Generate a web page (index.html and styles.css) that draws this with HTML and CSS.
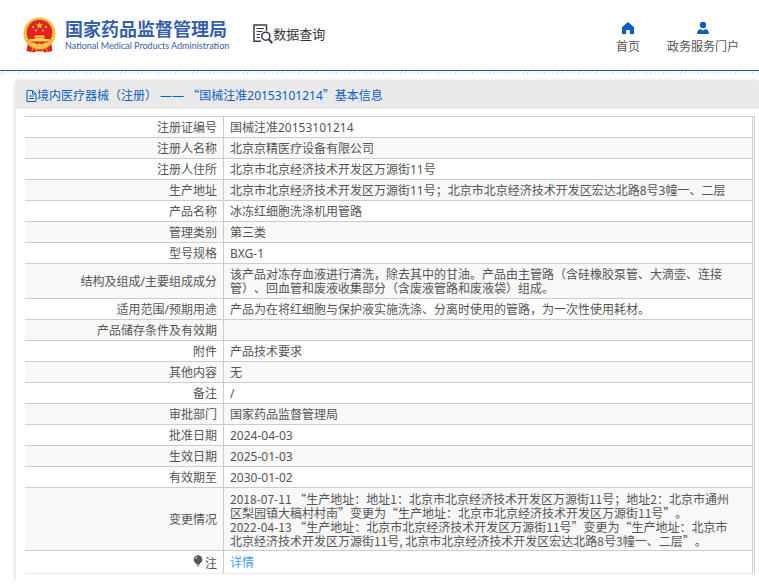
FILE: index.html
```
<!DOCTYPE html>
<html lang="zh-CN">

<head>
  <meta charset="UTF-8">
  <title>国家药品监督管理局 数据查询</title>
  <link rel="stylesheet" href="styles.css">
</head>

<body>
  <header class="top-bar">
    <div class="brand">
      <svg class="emblem" viewBox="0 0 33 36" aria-hidden="true">
        <path d="M5 25 L3.500 34 Q9 36 16.500 34.500 Q24 36 29.500 34 L28 25z" fill="#dd2420" />
        <circle cx="16.500" cy="16.500" r="16" fill="#eeb73c" />
        <circle cx="16.500" cy="16.500" r="14.500" fill="none" stroke="#f9d968" stroke-width="1" stroke-dasharray="2 1.500" />
        <circle cx="16.500" cy="15.500" r="12.800" fill="#e2231f" />
        <path d="M16.500 5l1 2.200 2.400.2-1.800 1.600.6 2.400-2.200-1.300-2.200 1.300.6-2.400-1.800-1.600 2.400-.2z" fill="#f9cf3f" />
        <g fill="#f9cf3f">
          <circle cx="10" cy="10" r="1" />
          <circle cx="23" cy="10" r="1" />
          <circle cx="13" cy="13.500" r="1" />
          <circle cx="20" cy="13.500" r="1" />
        </g>
        <path d="M12 18.500h9l1 1.500h-11zM11.500 20.500h10v1.500h5v2.500h-20v-2.500h5z" fill="#f9d25a" />
        <path d="M7 26q5-1.500 7 1.500l2.500-1.500 2.500 1.500q2-3 7-1.500l-3 4.500-4-1.500-2.500 2.500-2.500-2.500-4 1.500z" fill="#f5c548" />
        <path d="M11 30l-2.500 4.500M22 30l2.500 4.500M14.500 31l-2 3.500h8l-2-3.500" fill="none" stroke="#f1b83b" stroke-width="1" />
      </svg>
      <div class="brand-text">
        <h1>国家药品监督管理局</h1>
        <p>National Medical Products Administration</p>
      </div>
      <div class="section">
        <svg class="search-icon" viewBox="0 0 20 20" fill="none" stroke="#3c3c50" aria-hidden="true">
          <path d="M8 17.200H1V1h12.500v6" stroke-width="1.500" />
          <path d="M3.500 4.500h7.500M3.500 7.500h6M3.500 10.500h3.500M3.500 13.500h3.500" stroke-width="1.200" />
          <circle cx="12.800" cy="12.200" r="4" stroke-width="1.600" />
          <path d="M15.700 15.200l3.500 3.800" stroke-width="2.200" />
        </svg>
        <span>数据查询</span>
      </div>
    </div>
    <nav class="menu">
      <a href="#">
        <svg viewBox="0 0 14 14" fill="#0a5fc2" aria-hidden="true">
          <path d="M7 1L1 6.200V13h4.200V9h3.600v4H13V6.200z" />
        </svg>
        首页
      </a>
      <a href="#">
        <svg viewBox="0 0 14 14" fill="#0a5fc2" aria-hidden="true">
          <circle cx="7" cy="4" r="3.200" />
          <path d="M1 13q.3-4.500 3.700-4.900L7 9.700l2.300-1.600q3.400.4 3.700 4.900z" />
        </svg>
        政务服务门户
      </a>
    </nav>
  </header>
  <div class="stripe"></div>

  <main class="panel">
    <h2 class="panel-title">
      <svg viewBox="0 0 11 12" fill="none" stroke="#0a5fc2" aria-hidden="true">
        <path d="M1 .500h5.500l3.500 3.500v7.500H1zM6.500 .500v3.500H10M3 6h5M3 8.500h5" />
      </svg>
      <span>境内医疗器械（注册） —— <span class="q">“</span>国械注准20153101214<span class="q">”</span>基本信息</span>
    </h2>

    <div class="table-wrap">
      <table class="info">
        <tbody>
          <tr><th scope="row">注册证编号</th><td>国械注准20153101214</td></tr>
          <tr><th scope="row">注册人名称</th><td>北京京精医疗设备有限公司</td></tr>
          <tr><th scope="row">注册人住所</th><td>北京市北京经济技术开发区万源街11号</td></tr>
          <tr><th scope="row">生产地址</th><td>北京市北京经济技术开发区万源街11号；北京市北京经济技术开发区宏达北路8号3幢一、二层</td></tr>
          <tr><th scope="row">产品名称</th><td>冰冻红细胞洗涤机用管路</td></tr>
          <tr><th scope="row">管理类别</th><td>第三类</td></tr>
          <tr><th scope="row">型号规格</th><td>BXG-1</td></tr>
          <tr><th scope="row">结构及组成/主要组成成分</th><td>该产品对冻存血液进行清洗，除去其中的甘油。产品由主管路（含硅橡胶泵管、大滴壶、连接管）、回血管和废液收集部分（含废液管路和废液袋）组成。</td></tr>
          <tr><th scope="row">适用范围/预期用途</th><td>产品为在将红细胞与保护液实施洗涤、分离时使用的管路，为一次性使用耗材。</td></tr>
          <tr><th scope="row">产品储存条件及有效期</th><td></td></tr>
          <tr><th scope="row">附件</th><td>产品技术要求</td></tr>
          <tr><th scope="row">其他内容</th><td>无</td></tr>
          <tr><th scope="row">备注</th><td>/</td></tr>
          <tr><th scope="row">审批部门</th><td>国家药品监督管理局</td></tr>
          <tr><th scope="row">批准日期</th><td>2024-04-03</td></tr>
          <tr><th scope="row">生效日期</th><td>2025-01-03</td></tr>
          <tr><th scope="row">有效期至</th><td>2030-01-02</td></tr>
          <tr>
            <th scope="row">变更情况</th>
            <td class="changes">2018-07-11 “生产地址：地址1：北京市北京经济技术开发区万源街11号；地址2：北京市通州区梨园镇大稿村村南”变更为“生产地址：北京市北京经济技术开发区万源街11号”。<br>2022-04-13 “生产地址：北京市北京经济技术开发区万源街11号”变更为“生产地址：北京市北京经济技术开发区万源街11号, 北京市北京经济技术开发区宏达北路8号3幢一、二层”。</td>
          </tr>
          <tr class="note">
            <th scope="row">
              <svg viewBox="0 0 10 12" aria-hidden="true">
                <circle cx="5" cy="4.500" r="4.300" fill="#55565a" />
                <path d="M3 8h4v1.500H3zM4 10.200h2v1H4z" fill="#55565a" />
                <path d="M2.500 4q.2-1.800 2-2.200" fill="none" stroke="#fff" stroke-width=".8" />
              </svg>注</th>
            <td><a href="#">详情</a></td>
          </tr>
        </tbody>
      </table>
    </div>
  </main>
</body>

</html>
```
FILE: styles.css
```
* {
  box-sizing: border-box;
}

body {
  margin: 0;
  background-color: #fff;
  color: #555;
  font-family: 'Noto Sans', 'Noto Sans CJK SC', sans-serif;
  font-size: 12px;
  line-height: 14px;
  text-spacing-trim: space-all;
}

a {
  text-decoration: none;
}

.top-bar {
  display: flex;
  align-items: center;
  justify-content: space-between;
  height: 71px;
  padding: 0 20px 0 23px;
  border-bottom: 1px solid #0a5fc2;
}

.brand {
  display: flex;
  align-items: center;
}

.emblem {
  width: 33px;
  height: 36px;
  margin-right: 9px;
}

.brand-text {
  padding-bottom: 1px;
}

.brand-text h1 {
  margin: 0;
  color: #3560ad;
  font-size: 18px;
  line-height: 22px;
  font-weight: bold;
}

.brand-text p {
  margin: 0;
  color: #3560ad;
  font-family: Lato, sans-serif;
  font-size: 9px;
  line-height: 12px;
}

.section {
  display: flex;
  align-items: center;
  margin-left: 24px;
  padding-bottom: 2px;
  color: #333;
  font-size: 13px;
}

.search-icon {
  width: 20px;
  height: 20px;
}

.menu {
  display: flex;
  gap: 27px;
  padding-top: 4px;
}

.menu a {
  display: flex;
  flex-direction: column;
  align-items: center;
  gap: 5px;
  color: #555;
}

.menu svg {
  width: 14px;
  height: 14px;
}

.stripe {
  height: 3px;
  background: repeating-linear-gradient(135deg, #fff 0, #fff 2px, #e6e4e6 2px, #e6e4e6 3px);
}

.panel {
  margin: 7px 0 0 16px;
  box-shadow: 0 0 4px rgba(0, 0, 0, 0.2);
}

.panel-title {
  display: flex;
  align-items: center;
  margin: 0;
  height: 28px;
  padding: 2px 0 0 10px;
  background-color: #e9e9e9;
  border-bottom: 1px solid #ebebf3;
  color: #0a5fc2;
  font-size: 12px;
  font-weight: normal;
}

.panel-title svg {
  width: 11px;
  height: 12px;
}

.q,
.info .changes {
  font-family: 'Noto Sans CJK SC', sans-serif;
}

.table-wrap {
  padding: 7px 4px 7px 9px;
}

.info {
  width: 100%;
  border-collapse: separate;
  border-spacing: 0;
  border-top: 1px solid #ccc;
  border-right: 1px solid #ccc;
  border-bottom: 1px solid #ebebeb;
  padding-right: 1px;
}

.info th,
.info td {
  padding: 4px 6px 2px;
  border-right: 1px solid #ccc;
  border-bottom: 1px solid #ccc;
  font-weight: normal;
}

.info th {
  width: 199px;
  text-align: right;
}

.info td {
  height: 21px;
  padding-right: 14px;
  text-align: left;
}

.info tr:nth-child(even) {
  background-color: #f8f8f8;
}

.info .note th,
.info .note td {
  height: 22px;
  border-bottom: none;
}

.note svg {
  width: 10px;
  height: 12px;
  margin-right: 2px;
  vertical-align: text-top;
}

.note a {
  color: #409eff;
}
```
